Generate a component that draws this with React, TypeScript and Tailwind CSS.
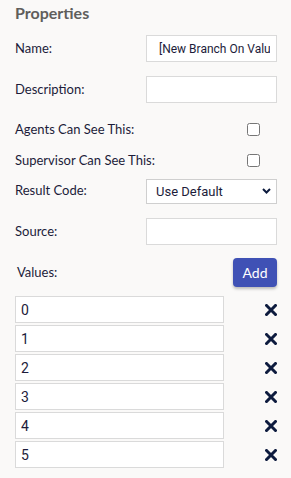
import { useState } from 'react'

const labelCls = "text-[13px] text-[#1c1c3a] font-['Lato',sans-serif] leading-none"
const inputCls =
  "h-[27px] w-[131px] border border-[#dadada] bg-white pl-[12px] pr-[6px] text-[12px] text-[#1c1c3a] font-['Roboto',sans-serif] outline-none"

function XIcon() {
  return (
    <svg width="12" height="12" viewBox="0 0 12 12" aria-hidden="true">
      <path d="M1.5 1.5 L10.5 10.5 M10.5 1.5 L1.5 10.5" stroke="#0d1b3e" strokeWidth="3" strokeLinecap="square" />
    </svg>
  )
}

export default function App() {
  const [values] = useState(['0', '1', '2', '3', '4', '5'])

  return (
    <div className="min-h-[478px] w-[291px] bg-[#faf9f8] pl-[15px] pr-[14px]">
      <h2 className="pt-[3px] text-[16px] font-bold leading-[20px] text-[#605e5c] font-['Lato',sans-serif]">
        Properties
      </h2>

      <div className="mt-[12px] flex h-[27px] items-center justify-between">
        <span className={labelCls}>Name:</span>
        <input className={inputCls} defaultValue="[New Branch On Value]" />
      </div>

      <div className="mt-[14px] flex h-[27px] items-center justify-between">
        <span className={labelCls}>Description:</span>
        <input className={inputCls} />
      </div>

      <div className="mt-[16px] flex h-[20px] items-center">
        <span className={labelCls}>Agents Can See This:</span>
        <input type="checkbox" className="m-0 ml-auto mr-[17px] h-[13px] w-[13px]" />
      </div>

      <div className="mt-[11px] flex h-[20px] items-center">
        <span className={labelCls}>Supervisor Can See This:</span>
        <input type="checkbox" className="m-0 ml-auto mr-[17px] h-[13px] w-[13px]" />
      </div>

      <div className="mt-[8px] flex h-[25px] items-center justify-between">
        <span className={labelCls}>Result Code:</span>
        <div className="relative h-[25px] w-[131px]">
          <select className="h-full w-full appearance-none border border-[#cfcfcf] bg-white pl-[9px] text-[13px] text-[#1c1c3a] font-['Roboto',sans-serif] outline-none">
            <option>Use Default</option>
          </select>
          <svg
            className="pointer-events-none absolute right-[6px] top-[10px]"
            width="9"
            height="6"
            viewBox="0 0 9 6"
            aria-hidden="true"
          >
            <path d="M1 1 L4.5 4.5 L8 1" fill="none" stroke="#0d1b3e" strokeWidth="2" />
          </svg>
        </div>
      </div>

      <div className="mt-[15px] flex h-[27px] items-center justify-between">
        <span className={labelCls}>Source:</span>
        <input className={inputCls} />
      </div>

      <div className="mt-[13px] flex h-[29px] items-center justify-between">
        <span className={`${labelCls} pl-[2px]`}>Values:</span>
        <button className="h-[29px] w-[44px] rounded-[4px] bg-[#3f51b5] text-[14px] text-white shadow-[0_2px_3px_rgba(0,0,0,0.25)] font-['Lato',sans-serif]">
          Add
        </button>
      </div>

      <div className="mt-[9px] flex flex-col gap-[2px]">
        {values.map((v) => (
          <div key={v} className="flex h-[27px] items-center justify-between">
            <input
              className="h-[27px] w-[209px] border border-[#dadada] bg-white px-[5px] text-[14px] text-[#1c1c3a] font-['Roboto',sans-serif] outline-none"
              defaultValue={v}
            />
            <XIcon />
          </div>
        ))}
      </div>
    </div>
  )
}
